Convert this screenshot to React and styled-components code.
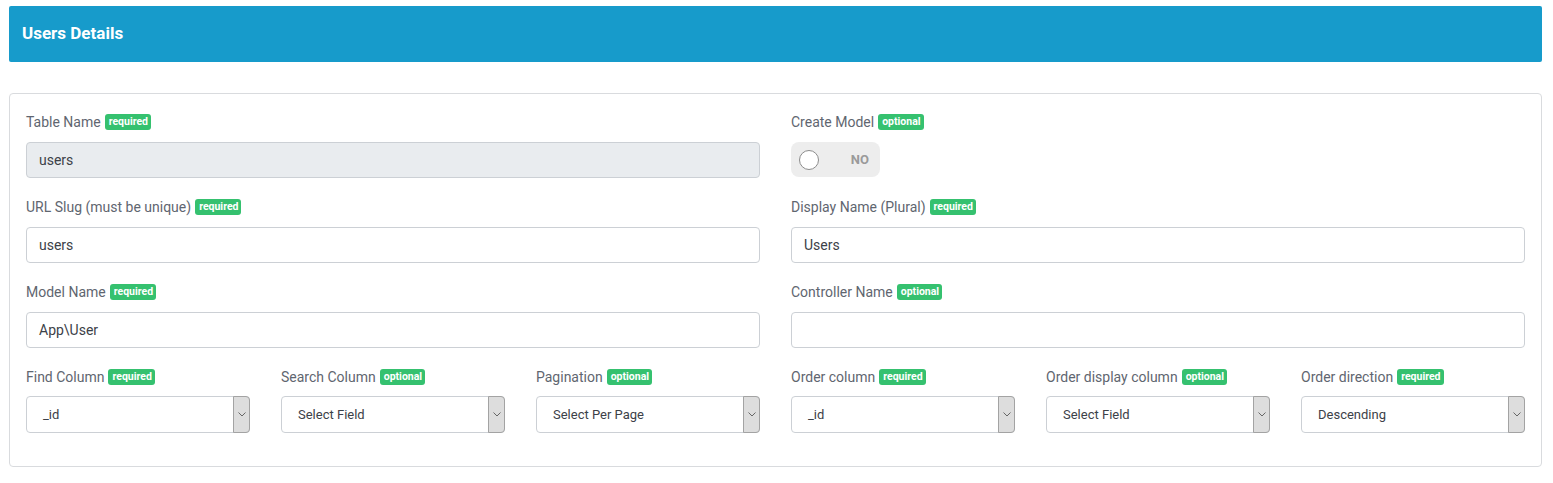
import React from "react";
import styled, { createGlobalStyle } from "styled-components";

const GlobalStyle = createGlobalStyle`
  body {
    margin: 0;
    background: #fff;
    font-family: Roboto, "Liberation Sans", sans-serif;
  }
  * { box-sizing: border-box; }
`;

const Page = styled.div`
  padding: 6px 11px 0 9px;
`;

const Header = styled.div`
  height: 56px;
  background: #179bcb;
  border-radius: 2px;
  display: flex;
  align-items: center;
  padding: 0 13px 2px;
  color: #fff;
  font-size: 17px;
  font-weight: 700;
  margin-bottom: 31px;
`;

const Card = styled.div`
  border: 1px solid #d9dbde;
  border-radius: 4px;
  padding: 17px 16px 15px 16px;
`;

const Grid = styled.div`
  display: grid;
  grid-template-columns: repeat(6, 1fr);
  column-gap: 31px;
`;

const Group = styled.div`
  grid-column: span ${(p) => p.$span || 3};
  margin-bottom: 18px;
`;

const Label = styled.div`
  display: flex;
  align-items: center;
  height: 21px;
  margin-bottom: 10px;
  font-size: 14px;
  color: #5f6670;
`;

const Badge = styled.span`
  margin-left: 4px;
  background: #35c16f;
  color: #fff;
  font-size: 10.5px;
  font-weight: 700;
  line-height: 10px;
  padding: 3px 3px 3px 4px;
  border-radius: 3px;
`;

const Input = styled.div`
  height: 36px;
  border: 1px solid #ccd0d5;
  border-radius: 4px;
  background: ${(p) => (p.$disabled ? "#e9ecef" : "#fff")};
  display: flex;
  align-items: center;
  padding: 0 12px;
  font-size: 14px;
  color: #3c4148;
`;

const Toggle = styled.div`
  width: 89px;
  height: 35px;
  background: #ededed;
  border-radius: 8px;
  display: flex;
  align-items: center;
  padding: 0 10px 0 8px;
  justify-content: space-between;
`;

const Knob = styled.span`
  width: 20px;
  height: 20px;
  border-radius: 50%;
  background: #fff;
  border: 1px solid #8c8c8c;
`;

const ToggleText = styled.span`
  font-size: 13px;
  font-weight: 700;
  color: #9a9a9a;
  margin-right: 1px;
`;

const Select = styled.div`
  height: 37px;
  margin-top: -1px;
  border: 1px solid #ccd0d5;
  border-radius: 4px;
  display: flex;
  align-items: stretch;
  font-size: 13px;
  color: #3c4148;
`;

const SelectText = styled.div`
  flex: 1;
  display: flex;
  align-items: center;
  padding-left: 16px;
`;

const Arrow = styled.div`
  width: 17px;
  margin: -1px -1px -1px 0;
  background: #dddddd;
  border: 1px solid #a3a3a3;
  border-radius: 0 4px 4px 0;
  display: flex;
  align-items: center;
  justify-content: center;
`;

const Tag = ({ kind }) => <Badge>{kind}</Badge>;

const Chevron = () => (
  <svg width="8" height="5" viewBox="0 0 8 5">
    <path d="M0.5 0.5 L4 4 L7.5 0.5" fill="none" stroke="#666" strokeWidth="1" />
  </svg>
);

const SelectField = ({ label, kind, value }) => (
  <Group $span={1}>
    <Label>
      {label} <Tag kind={kind} />
    </Label>
    <Select>
      <SelectText>{value}</SelectText>
      <Arrow>
        <Chevron />
      </Arrow>
    </Select>
  </Group>
);

const selects = [
  ["Find Column", "required", "_id"],
  ["Search Column", "optional", "Select Field"],
  ["Pagination", "optional", "Select Per Page"],
  ["Order column", "required", "_id"],
  ["Order display column", "optional", "Select Field"],
  ["Order direction", "required", "Descending"],
];

export default function App() {
  return (
    <Page>
      <GlobalStyle />
      <Header>Users Details</Header>
      <Card>
        <Grid>
          <Group>
            <Label>
              Table Name <Tag kind="required" />
            </Label>
            <Input $disabled>users</Input>
          </Group>
          <Group>
            <Label>
              Create Model <Tag kind="optional" />
            </Label>
            <Toggle>
              <Knob />
              <ToggleText>NO</ToggleText>
            </Toggle>
          </Group>
          <Group>
            <Label>
              URL Slug (must be unique) <Tag kind="required" />
            </Label>
            <Input>users</Input>
          </Group>
          <Group>
            <Label>
              Display Name (Plural) <Tag kind="required" />
            </Label>
            <Input>Users</Input>
          </Group>
          <Group>
            <Label>
              Model Name <Tag kind="required" />
            </Label>
            <Input>App\User</Input>
          </Group>
          <Group>
            <Label>
              Controller Name <Tag kind="optional" />
            </Label>
            <Input />
          </Group>
          {selects.map(([l, k, v]) => (
            <SelectField key={l} label={l} kind={k} value={v} />
          ))}
        </Grid>
      </Card>
    </Page>
  );
}
